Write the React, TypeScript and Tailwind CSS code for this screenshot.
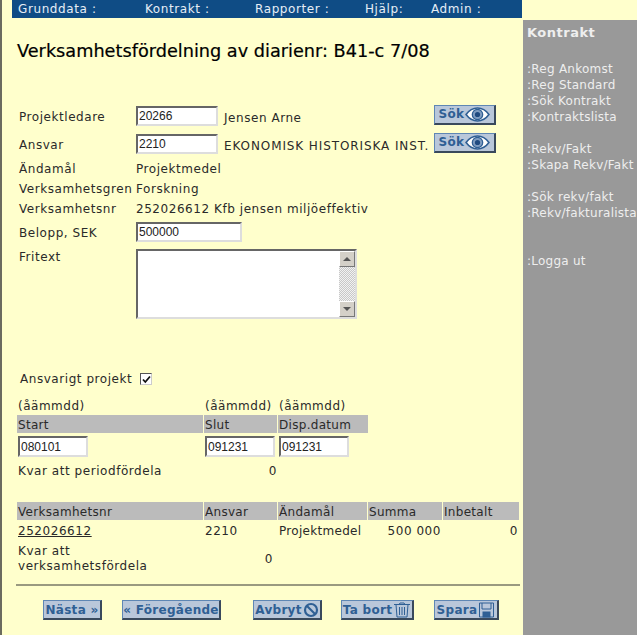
import React from "react";

const font = "[font-family:'DejaVu_Sans',Verdana,sans-serif]";

function Field({ w, value }: { w: string; value: string }) {
  return (
    <div className={`${w} h-full bg-white border-2 border-t-[#666] border-l-[#666] border-r-[#ddd] border-b-[#ddd] pl-px flex items-center text-[12px] leading-none tracking-normal text-[#222] [font-family:'Liberation_Sans',Arial,sans-serif]`}>
      {value}
    </div>
  );
}

function Eye() {
  return (
    <svg width="25" height="15" viewBox="0 0 24 14" fill="none">
      <path d="M1 7C5 1.5 9 .8 12 .8S19 1.5 23 7c-4 5.500-8 6.200-11 6.200S5 12.500 1 7Z" fill="#fff" stroke="#2f5f94" strokeWidth="1.500" />
      <circle cx="12" cy="7" r="5" fill="#7f9cc0" stroke="#2f5f94" strokeWidth="1.200" />
      <circle cx="12" cy="7" r="2.500" fill="#1f4a80" />
    </svg>
  );
}

function Btn({ w, children, extra = "" }: { w: string; children: React.ReactNode; extra?: string }) {
  return (
    <div className={`${w} ${extra} shrink-0 whitespace-nowrap bg-[#b9c7da] border border-[#5f87b4] border-r-[#39495c] border-b-[#39495c] border-r-2 border-b-2 flex items-center justify-center gap-px text-[12px] font-bold leading-none tracking-[0.3px] text-[#2f5f94]`}>
      {children}
    </div>
  );
}

const Lbl = ({ children }: { children: React.ReactNode }) => (
  <div className="w-[117px] ml-[17px] pt-[2px] shrink-0 whitespace-nowrap">{children}</div>
);

const side = ":Reg Ankomst|:Reg Standard|:Sök Kontrakt|:Kontraktslista||:Rekv/Fakt|:Skapa Rekv/Fakt||:Sök rekv/fakt|:Rekv/fakturalista|||:Logga ut".split("|");

export default function App() {
  return (
    <div className={`${font} w-[637px] h-[635px] overflow-hidden bg-[#ffffcc] flex text-[12px] leading-[16px] text-[#2a2a2a] tracking-[0.55px]`}>
      <div className="w-[523px] h-full shrink-0 border-l-2 border-[#6b6b5f]">
        <div className="ml-[10px] w-[510px] h-[18px] bg-[#0f4c85] flex items-center text-[#e6eef6] text-[12px] tracking-[0.6px]">
          <span className="ml-[6px] w-[127px]">Grunddata :</span>
          <span className="w-[110px]">Kontrakt :</span>
          <span className="w-[110px]">Rapporter :</span>
          <span className="w-[66px]">Hjälp:</span>
          <span>Admin :</span>
        </div>

        <div className="mt-[23px] ml-[15px] h-[20px] flex items-center text-[17.700px] tracking-normal text-black whitespace-nowrap [-webkit-text-stroke:0.2px_black]">
          Verksamhetsfördelning av diarienr: B41-c 7/08
        </div>

        <div className="mt-[45px] flex items-center h-[20px]">
          <Lbl>Projektledare</Lbl>
          <Field w="w-[82px]" value="20266" />
          <span className="ml-[6px] w-[210px] mt-[4px]">Jensen Arne</span>
          <Btn w="w-[62px]" extra="h-[20px] -mt-[3px]">Sök <Eye /></Btn>
        </div>

        <div className="mt-[8px] flex items-center h-[20px]">
          <Lbl>Ansvar</Lbl>
          <Field w="w-[82px]" value="2210" />
          <span className="ml-[6px] w-[210px] mt-[4px] whitespace-nowrap tracking-[0.9px]">EKONOMISK HISTORISKA INST.</span>
          <Btn w="w-[62px]" extra="h-[20px] -mt-[3px]">Sök <Eye /></Btn>
        </div>

        <div className="mt-[4px] flex items-center h-[20px]"><Lbl>Ändamål</Lbl><span className="pt-[2px]">Projektmedel</span></div>
        <div className="flex items-center h-[20px]"><Lbl>Verksamhetsgren</Lbl><span className="pt-[2px]">Forskning</span></div>
        <div className="flex items-center h-[20px]"><Lbl>Verksamhetsnr</Lbl><span className="pt-[2px]">252026612 Kfb jensen miljöeffektiv</span></div>

        <div className="mt-[4px] flex items-center h-[20px]">
          <Lbl>Belopp, SEK</Lbl>
          <Field w="w-[106px]" value="500000" />
        </div>

        <div className="mt-[7px] flex h-[70px]">
          <div className="w-[117px] ml-[17px] shrink-0">Fritext</div>
          <div className="w-[221px] h-full bg-white border-2 border-t-[#666] border-l-[#666] border-r-[#ddd] border-b-[#ddd] flex justify-end">
            <div className="w-[16px] h-full flex flex-col justify-between bg-[repeating-conic-gradient(#c8c8c8_0_25%,#f2f2f2_0_50%)] bg-[length:2px_2px]">
              <div className="h-[16px] bg-[#d4d0c8] border border-t-white border-l-white border-r-[#777] border-b-[#777] flex items-center justify-center">
                <div className="w-0 h-0 border-x-[4px] border-x-transparent border-b-[4px] border-b-[#555]" />
              </div>
              <div className="h-[16px] bg-[#d4d0c8] border border-t-white border-l-white border-r-[#777] border-b-[#777] flex items-center justify-center">
                <div className="w-0 h-0 border-x-[4px] border-x-transparent border-t-[4px] border-t-[#555]" />
              </div>
            </div>
          </div>
        </div>

        <div className="mt-[51px] ml-[18px] h-[18px] flex items-center gap-[8px]">
          <span>Ansvarigt projekt</span>
          <div className="w-[12px] h-[12px] bg-white border border-t-[#555] border-l-[#555] border-r-[#ccc] border-b-[#ccc] flex items-center justify-center">
            <svg width="9" height="9" viewBox="0 0 9 9"><path d="M1 4.500 3.300 7 8 1.500" fill="none" stroke="#111" strokeWidth="1.800" /></svg>
          </div>
        </div>

        <div className="mt-[10px] ml-[16px] h-[16px] flex items-center tracking-[0.5px]">
          <span className="w-[187px]">(åämmdd)</span>
          <span className="w-[74px]">(åämmdd)</span>
          <span>(åämmdd)</span>
        </div>

        <div className="mt-[1px] ml-[15px] w-[351px] h-[18px] flex gap-px tracking-[0.3px]">
          <div className="w-[186px] bg-[#bbbbbb] pl-[1px] pt-[2px] flex items-center">Start</div>
          <div className="w-[73px] bg-[#bbbbbb] pl-[1px] pt-[2px] flex items-center">Slut</div>
          <div className="flex-1 bg-[#bbbbbb] pl-[1px] pt-[2px] flex items-center">Disp.datum</div>
        </div>

        <div className="mt-[3px] ml-[16px] h-[21px] flex">
          <Field w="w-[70px]" value="080101" />
          <div className="w-[117px]" />
          <Field w="w-[70px]" value="091231" />
          <div className="w-[4px]" />
          <Field w="w-[70px]" value="091231" />
        </div>

        <div className="mt-[6px] ml-[16px] h-[16px] flex items-center w-[259px] justify-between">
          <span>Kvar att periodfördela</span>
          <span>0</span>
        </div>

        <div className="mt-[23px] ml-[15px] w-[502px] h-[18px] flex gap-px tracking-[0.3px]">
          <div className="w-[186px] bg-[#bbbbbb] pl-[1px] pt-[2px] flex items-center">Verksamhetsnr</div>
          <div className="w-[73px] bg-[#bbbbbb] pl-[1px] pt-[2px] flex items-center">Ansvar</div>
          <div className="w-[89px] bg-[#bbbbbb] pl-[1px] pt-[2px] flex items-center">Ändamål</div>
          <div className="w-[74px] bg-[#bbbbbb] pl-[1px] pt-[2px] flex items-center">Summa</div>
          <div className="flex-1 bg-[#bbbbbb] pl-[1px] pt-[2px] flex items-center">Inbetalt</div>
        </div>

        <div className="mt-[1px] ml-[16px] w-[500px] h-[20px] flex items-center">
          <a className="w-[187px] underline">252026612</a>
          <span className="w-[74px]">2210</span>
          <span className="w-[90px] whitespace-nowrap tracking-[0.3px]">Projektmedel</span>
          <span className="w-[72px] text-right whitespace-nowrap">500 000</span>
          <span className="flex-1 text-right">0</span>
        </div>

        <div className="mt-[2px] ml-[16px] w-[255px] h-[32px] flex items-center justify-between">
          <span className="leading-[15px]">Kvar att<br />verksamhetsfördela</span>
          <span>0</span>
        </div>

        <div className="mt-[9px] ml-[14px] w-[504px] h-[2px] bg-[#9a9a80]" />

        <div className="mt-[14px] ml-[41px] flex">
          <Btn w="w-[59px]" extra="h-[20px]">Nästa »</Btn>
          <div className="w-[20px]" />
          <Btn w="w-[99px]" extra="h-[20px] tracking-[0.1px]">« Föregående</Btn>
          <div className="w-[32px]" />
          <Btn w="w-[69px]" extra="h-[20px]">Avbryt
            <svg width="16" height="16" viewBox="0 0 16 16" fill="none"><circle cx="8" cy="8" r="6" stroke="#2f5f94" strokeWidth="2.200" /><path d="M4 4l8 8" stroke="#2f5f94" strokeWidth="2.200" /></svg>
          </Btn>
          <div className="w-[19px]" />
          <Btn w="w-[73px]" extra="h-[20px]">Ta bort
            <svg width="18" height="16" viewBox="0 0 18 16" fill="none" stroke="#2f5f94" strokeWidth="1"><path d="M1 2.500h16M3 2.500 4 15h10l1-12.500M6.500 5v8M9 5v8M11.500 5v8M6 2.500 7 1h4l1 1.500" /></svg>
          </Btn>
          <div className="w-[20px]" />
          <Btn w="w-[65px]" extra="h-[20px]">Spara
            <svg width="17" height="16" viewBox="0 0 17 16" fill="none" stroke="#2f5f94" strokeWidth="1"><path d="M1.500 1h14v14h-14zM4 1v6h9V1" /><rect x="5" y="10" width="7" height="5" fill="#2f5f94" /></svg>
          </Btn>
        </div>
      </div>

      <div className="mt-[20px] flex-1 h-[615px] bg-[#999999] pl-[4px] text-[#eeeeee] whitespace-nowrap tracking-[0.25px]">
        <div className="mt-[5px] h-[16px] text-[13px] font-bold tracking-[0.5px]">Kontrakt</div>
        <div className="mt-[20px]">
          {side.map((s, i) => (
            <div key={i} className="h-[16px]">{s}</div>
          ))}
        </div>
      </div>
    </div>
  );
}
